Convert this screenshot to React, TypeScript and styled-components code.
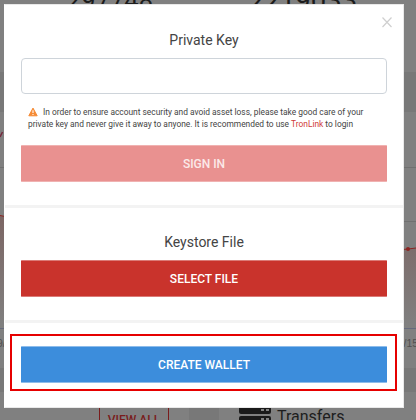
import React from "react";
import styled, { createGlobalStyle } from "styled-components";

const Global = createGlobalStyle`
  *, *::before, *::after { box-sizing: border-box; }
  html, body { margin: 0; height: 420px; overflow: hidden; }
  body { background: #787878; font-family: Roboto, "Liberation Sans", sans-serif; color: #333; }
`;

const Page = styled.main`
  position: relative;
  width: 416px;
  height: 420px;
  overflow: hidden;
`;

const Backdrop = styled.div`
  display: flex;
  flex-direction: column;
  height: 420px;
  overflow: hidden;
`;

const Stats = styled.section`
  display: flex;
  flex: none;
  height: 72px;
  padding-left: 67px;
  background: #808080;
`;

const Figure = styled.span<{ $width: number; $size: number }>`
  flex: none;
  width: ${(p) => p.$width}px;
  margin-top: -13px;
  font-size: ${(p) => p.$size}px;
  line-height: 27px;
  color: #1c1c1c;
`;

const ChartPanel = styled.section`
  flex: none;
  height: 256px;
  margin-top: 40px;
  background: #808080;
`;

const Cards = styled.section`
  display: grid;
  grid-template-columns: 189px 197px;
  gap: 30px;
  flex: none;
  height: 28px;
  margin-top: 24px;
`;

const Card = styled.div`
  display: flex;
  align-items: flex-start;
  background: #808080;
  overflow: hidden;
`;

const ViewAll = styled.span`
  flex: none;
  width: 70px;
  height: 40px;
  margin-left: 99px;
  padding-top: 20px;
  border: 1px solid #7a1c1c;
  color: #7a1c1c;
  font-size: 12px;
  font-weight: 500;
  line-height: 14px;
  text-align: center;
`;

const ServerIcon = styled.svg`
  flex: none;
  width: 32px;
  height: 28px;
  margin-left: 20px;
`;

const Transfers = styled.span`
  margin: 15px 0 0 6px;
  font-size: 16px;
  line-height: 20px;
  color: #1d1d1d;
`;

const Dialog = styled.section`
  position: absolute;
  top: 4px;
  left: 4px;
  display: flex;
  flex-direction: column;
  width: 400px;
  height: 404px;
  border: 1px solid #e9e9e9;
  border-left-color: #fff;
  background: #fff;
`;

const Close = styled.button`
  position: absolute;
  top: 11px;
  right: 10px;
  display: flex;
  padding: 0;
  border: 0;
  background: none;
`;

const Block = styled.div<{ $height: number; $top: number; $last?: boolean }>`
  flex: none;
  height: ${(p) => p.$height}px;
  padding: ${(p) => p.$top}px 16px 0;
  border-bottom: ${(p) => (p.$last ? "0" : "3px solid #f3f3f3")};
`;

const Title = styled.h2`
  margin: 0;
  font-size: 14px;
  font-weight: 400;
  line-height: 20px;
  text-align: center;
  color: #444;
`;

const KeyInput = styled.input`
  display: block;
  width: 366px;
  height: 36px;
  margin-top: 8px;
  border: 1px solid #ced4da;
  border-radius: 4px;
  background: #fff;
`;

const Notice = styled.p`
  margin: 12px 0 15px 7px;
  font-size: 8.4px;
  line-height: 12px;
  white-space: nowrap;
  color: #444;
`;

const Line = styled.span`
  display: flex;
  align-items: center;
  height: 12px;
`;

const WarningIcon = styled.svg`
  width: 10px;
  height: 10px;
  margin-right: 5px;
`;

const Link = styled.a`
  margin: 0 2px;
  color: #cf3b38;
`;

const Action = styled.button<{ $color: string; $edge: string; $ink?: string }>`
  display: block;
  width: 366px;
  height: 37px;
  padding: 1px 0 0;
  border: solid ${(p) => p.$edge};
  border-width: 1px 0;
  border-radius: 1px;
  background: ${(p) => p.$color};
  color: ${(p) => p.$ink ?? "#fff"};
  font: 500 12px/34px Roboto, sans-serif;
`;

const SelectAction = styled(Action)`
  margin-top: 8px;
`;

const Highlight = styled.div`
  width: 387px;
  height: 57px;
  margin-left: -11px;
  padding: 10px 9px;
  border: 2px solid #e60000;
`;

export default function App() {
  return (
    <Page>
      <Global />
      <Backdrop>
        <Stats>
          <Figure $width={182} $size={25.5}>297748</Figure>
          <Figure $width={150} $size={27.5}>2219033</Figure>
        </Stats>
        <ChartPanel>
          <svg width="416" height="256" viewBox="0 112 416 256">
            <defs>
              <linearGradient id="area" x1="0" y1="0" x2="0" y2="1">
                <stop offset="0" stopColor="#7c6664" />
                <stop offset="1" stopColor="#808080" />
              </linearGradient>
            </defs>
            <path d="M0 167.5H416M0 221.5H416" stroke="#707070" />
            <path d="M0 215.5L5 216.5L396 250L408 249L416 248V328H0Z" fill="url(#area)" />
            <path d="M0 215.5L5 216.5L396 250L408 249L416 248" stroke="#8c2522" fill="none" />
            <circle cx="408" cy="249" r="2" fill="#8c2522" />
            <path d="M0 328.5H416" stroke="#666a7c" />
            <path d="M0 137L2.5 132" stroke="#752a3e" strokeWidth="1.5" />
            <text x="-3" y="346.5" fontFamily="Liberation Sans" fontSize="10.5" fill="#515151">9/</text>
            <text x="403.5" y="346.5" fontFamily="Liberation Sans" fontSize="10.5" fill="#515151">/15</text>
          </svg>
        </ChartPanel>
        <Cards>
          <Card>
            <ViewAll>VIEW ALL</ViewAll>
          </Card>
          <Card>
            <ServerIcon viewBox="0 0 32 28">
              <rect y="13" width="32" height="9" rx="2" fill="#1a1a1a" />
              <rect y="24" width="32" height="9" rx="2" fill="#1a1a1a" />
              <path d="M22 18h3M27 18h3M22 27h3M27 27h3" stroke="#808080" strokeWidth="2" />
            </ServerIcon>
            <Transfers>Transfers</Transfers>
          </Card>
        </Cards>
      </Backdrop>

      <Dialog>
        <Close aria-label="Close">
          <svg width="12" height="12" viewBox="0 0 12 12">
            <path d="M1.5 1.5L10.5 11M10.5 1.5L1.5 11" stroke="#cfcfcf" strokeWidth="1.2" />
          </svg>
        </Close>
        <Block $height={203} $top={25}>
          <Title>Private Key</Title>
          <KeyInput aria-label="Private Key" />
          <Notice>
            <Line>
              <WarningIcon viewBox="0 0 10 10">
                <path d="M5 1.1L9.2 8.8H.8Z" fill="#f58b35" stroke="#f58b35" strokeLinejoin="round" />
                <path d="M5 3.2V6M5 7V8.1" stroke="#fff" strokeWidth="1.1" />
              </WarningIcon>
              In order to ensure account security and avoid asset loss, please take good care of your
            </Line>
            <Line>
              private key and never give it away to anyone. It is recommended to use <Link>TronLink</Link> to login
            </Line>
          </Notice>
          <Action $color="#e99190" $edge="#f0b2b1" $ink="#fbe9e9">SIGN IN</Action>
        </Block>
        <Block $height={115} $top={24}>
          <Title>Keystore File</Title>
          <SelectAction $color="#c9332c" $edge="#db7b77">SELECT FILE</SelectAction>
        </Block>
        <Block $height={84} $top={11} $last>
          <Highlight>
            <Action $color="#3c8ddc" $edge="#8dbceb">CREATE WALLET</Action>
          </Highlight>
        </Block>
      </Dialog>
    </Page>
  );
}
